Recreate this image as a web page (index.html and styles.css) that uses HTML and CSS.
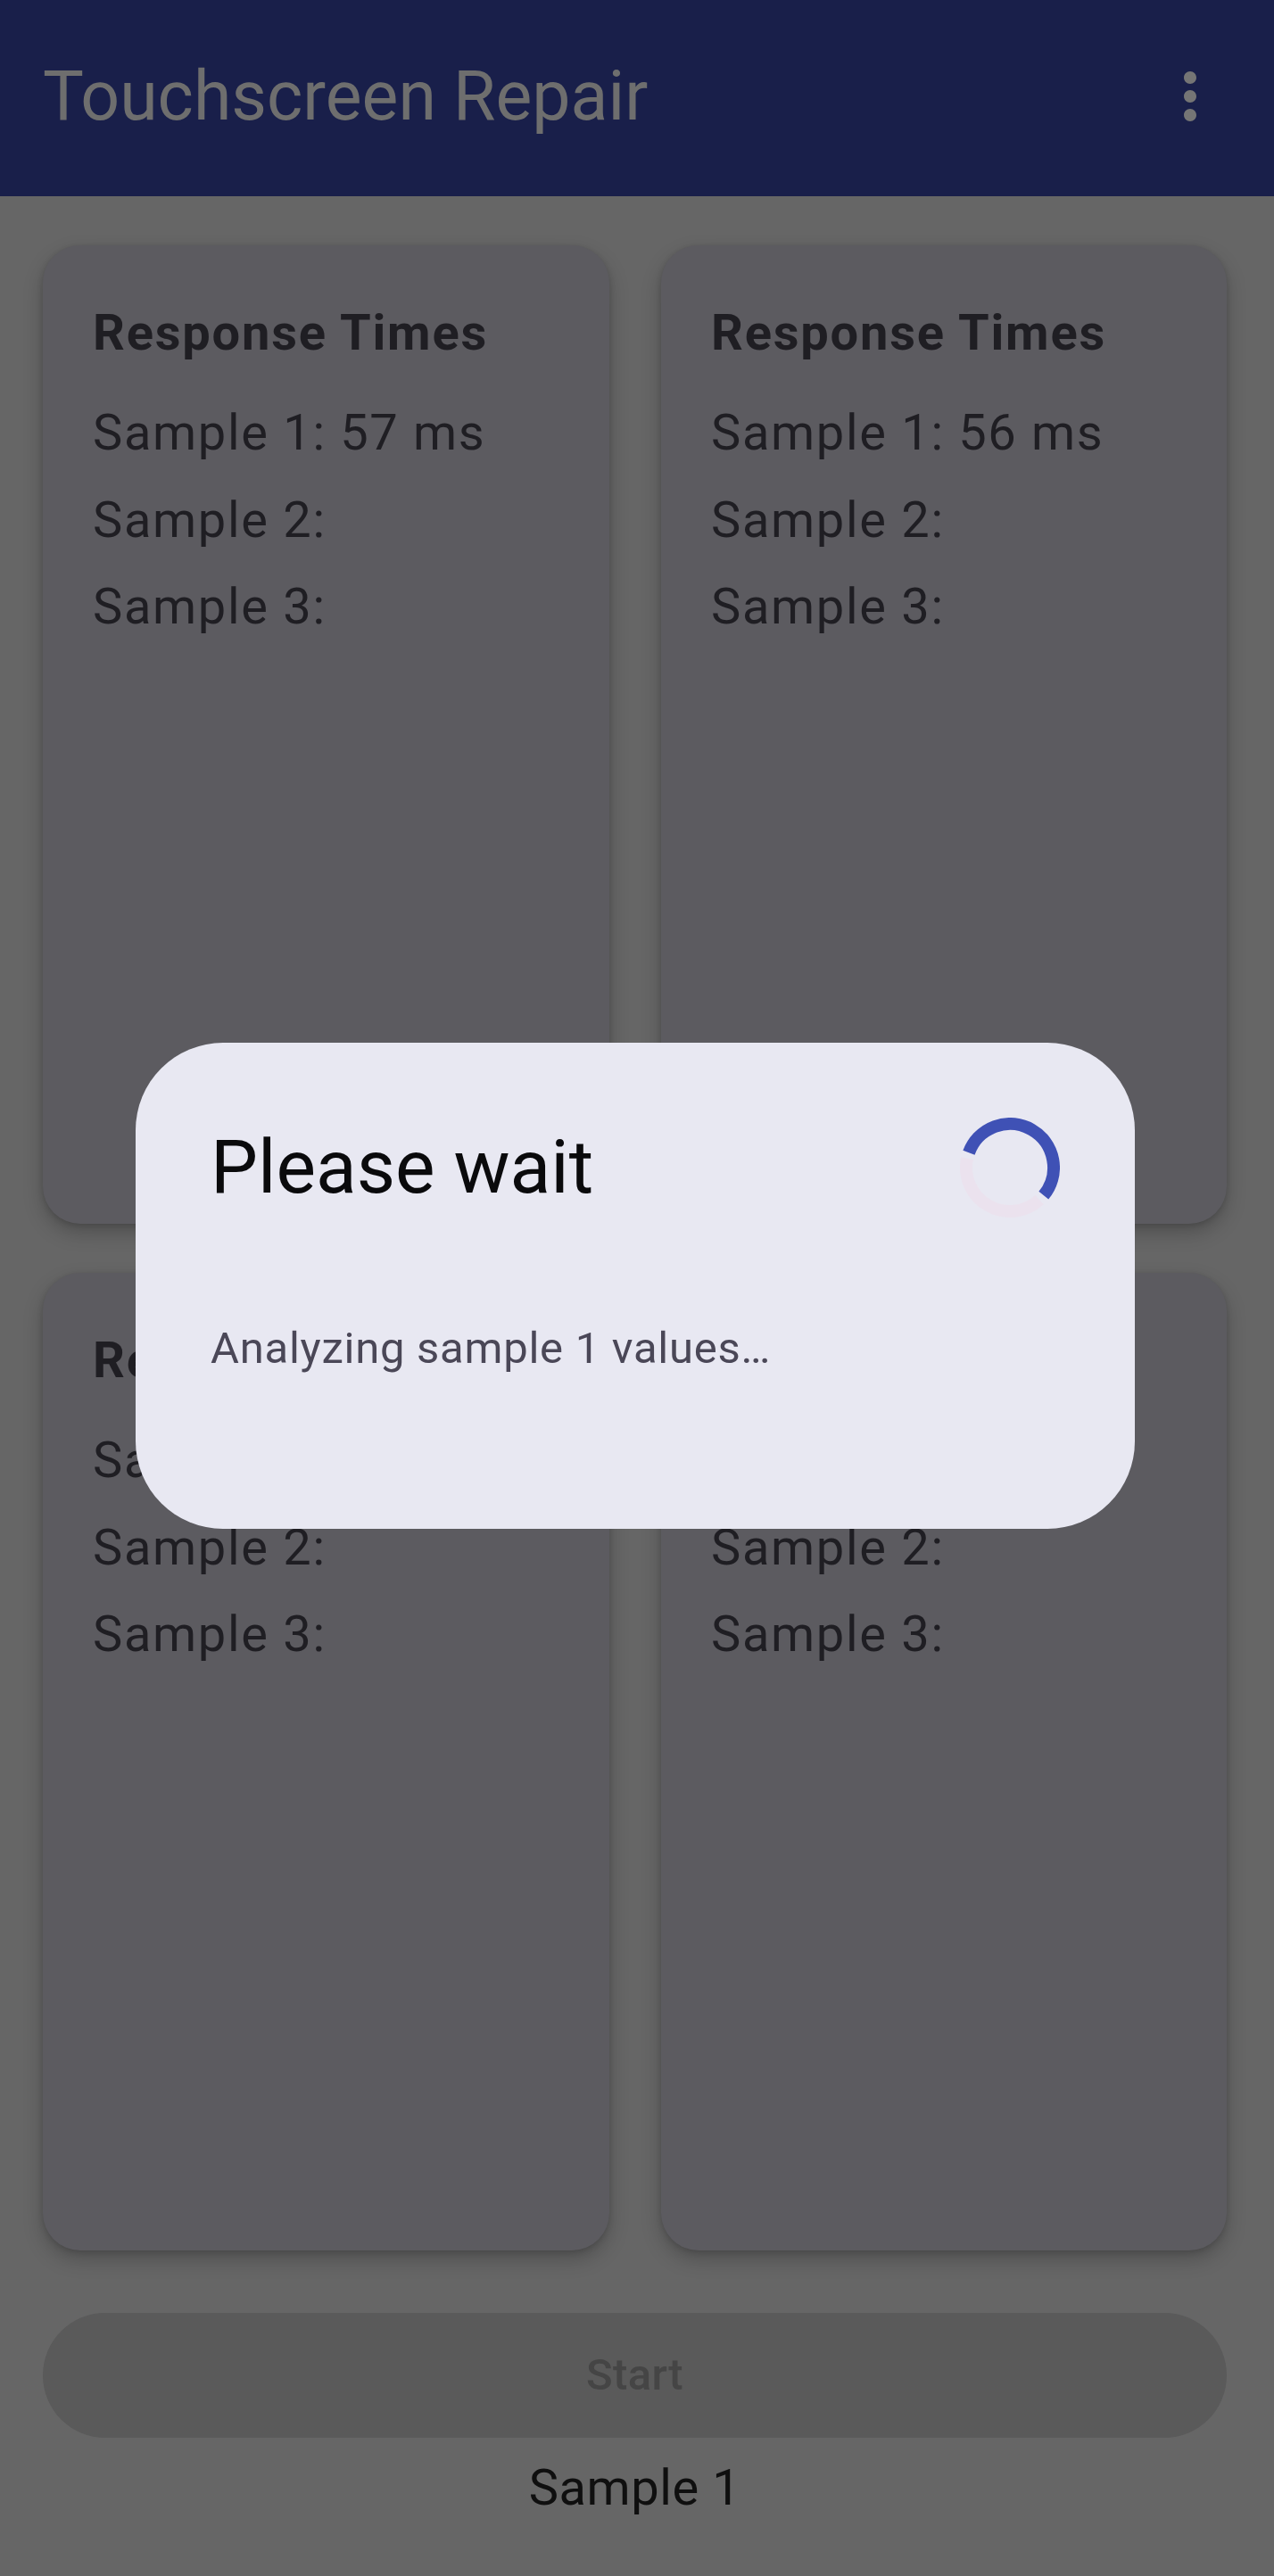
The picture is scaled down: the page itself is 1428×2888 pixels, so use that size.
FILE: index.html
```html
<!DOCTYPE html>
<html lang="en">
<head>
<meta charset="utf-8">
<title>Touchscreen Repair</title>
<link rel="stylesheet" href="styles.css">
</head>
<body>
<header class="appbar">
  <h1 class="appbar-title">Touchscreen Repair</h1>
  <svg class="appbar-menu" viewBox="0 0 24 24" aria-hidden="true"><path d="M12 8c1.1 0 2-.9 2-2s-.9-2-2-2-2 .9-2 2 .9 2 2 2zm0 2c-1.1 0-2 .9-2 2s.9 2 2 2 2-.9 2-2-.9-2-2-2zm0 6c-1.1 0-2 .9-2 2s.9 2 2 2 2-.9 2-2-.9-2-2-2z"/></svg>
</header>
<main class="content">
  <section class="grid">
    <div class="card">
      <h2 class="card-title">Response Times</h2>
      <p class="sample">Sample 1: 57 ms</p>
      <p class="sample">Sample 2:</p>
      <p class="sample">Sample 3:</p>
    </div>
    <div class="card">
      <h2 class="card-title">Response Times</h2>
      <p class="sample">Sample 1: 56 ms</p>
      <p class="sample">Sample 2:</p>
      <p class="sample">Sample 3:</p>
    </div>
    <div class="card">
      <h2 class="card-title">Response Times</h2>
      <p class="sample">Sample 1:</p>
      <p class="sample">Sample 2:</p>
      <p class="sample">Sample 3:</p>
    </div>
    <div class="card">
      <h2 class="card-title">Response Times</h2>
      <p class="sample">Sample 1:</p>
      <p class="sample">Sample 2:</p>
      <p class="sample">Sample 3:</p>
    </div>
  </section>
  <button class="start-btn" disabled>Start</button>
  <p class="status">Sample 1</p>
</main>
<div class="dialog" role="dialog">
  <div class="dialog-head">
    <h3 class="dialog-title">Please wait</h3>
    <svg class="spinner" viewBox="0 0 112 112" aria-hidden="true">
      <path class="spinner-track" d="M 89.10 92.13 A 49 49 0 0 1 8.07 45.81"/>
      <path class="spinner-arc" d="M 9.96 39.24 A 49 49 0 1 1 93.81 87.17"/>
    </svg>
  </div>
  <p class="dialog-text">Analyzing sample 1 values…</p>
</div>
</body>
</html>
```
FILE: styles.css
```css
* { box-sizing: border-box; }
html, body {
  margin: 0;
  padding: 0;
}
body {
  width: 1428px;
  height: 2888px;
  background: #666666;
  font-family: Roboto, "Noto Sans", "Liberation Sans", sans-serif;
  position: relative;
  overflow: hidden;
}
.appbar {
  height: 220px;
  background: #191f4a;
  display: flex;
  align-items: center;
  justify-content: space-between;
  padding: 0 52px 4px 48px;
}
.appbar-title {
  margin: 0;
  font-size: 77px;
  line-height: 98px;
  font-weight: 400;
  color: #6e6e6e;
}
.appbar-menu {
  width: 84px;
  height: 84px;
  fill: #757575;
}
.content {
  padding: 55px 53px 0 48px;
}
.grid {
  display: grid;
  grid-template-columns: 635px 634px;
  grid-template-rows: 1097px 1096px;
  column-gap: 58px;
  row-gap: 55px;
}
.card {
  background: #5c5b60;
  border-radius: 42px;
  padding: 56px;
  box-shadow: 0 10px 22px rgba(0, 0, 0, 0.22), 0 2px 6px rgba(0, 0, 0, 0.14);
}
.card-title {
  margin: 0 0 28px;
  font-size: 56px;
  line-height: 84px;
  font-weight: 700;
  letter-spacing: 0.032em;
  color: #1f1e23;
}
.sample {
  margin: 0 0 13.5px;
  font-size: 56px;
  line-height: 84px;
  font-weight: 400;
  letter-spacing: 0.03em;
  color: #1f1e23;
}
.start-btn {
  display: flex;
  align-items: center;
  justify-content: center;
  width: 100%;
  height: 140px;
  margin-top: 70px;
  border: 0;
  border-radius: 70px;
  background: #5a5a5a;
  font-family: inherit;
  font-size: 49px;
  line-height: 70px;
  font-weight: 500;
  letter-spacing: 0.007em;
  color: #454545;
  padding: 0;
}
.status {
  margin: 14px 0 0;
  text-align: center;
  font-size: 56px;
  line-height: 84px;
  color: #0f0f0f;
  letter-spacing: 0.01em;
}
.dialog {
  position: absolute;
  left: 152px;
  top: 1169px;
  width: 1120px;
  height: 545px;
  border-radius: 98px;
  background: #e8e8f2;
  padding: 84px;
}
.dialog-head {
  display: flex;
  align-items: center;
  justify-content: space-between;
  height: 112px;
}
.dialog-title {
  margin: 0;
  font-size: 84px;
  line-height: 112px;
  font-weight: 400;
  color: #0a0a0c;
}
.spinner {
  width: 112px;
  height: 112px;
  fill: none;
}
.spinner-track {
  stroke: #ebe2ee;
  stroke-width: 14;
}
.spinner-arc {
  stroke: #3f51b5;
  stroke-width: 14;
}
.dialog-text {
  margin: 112px 0 0;
  font-size: 49px;
  line-height: 70px;
  letter-spacing: 0.015em;
  color: #4a4757;
}
```
